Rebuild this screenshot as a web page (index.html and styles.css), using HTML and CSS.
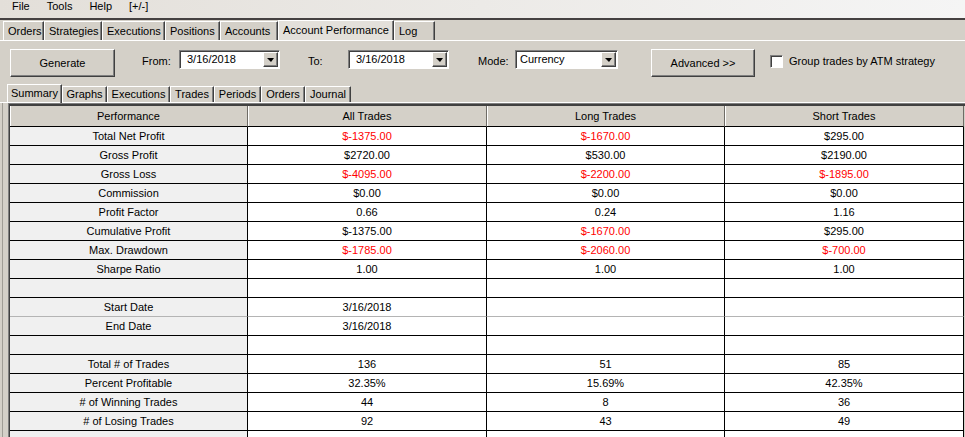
FILE: index.html
```html
<!DOCTYPE html>
<html lang="en">
<head>
<meta charset="utf-8">
<title>Account Performance</title>
<link rel="stylesheet" href="styles.css">
</head>
<body>
<div class="app">
  <nav class="menubar">
    <span>File</span>
    <span>Tools</span>
    <span>Help</span>
    <span>[+/-]</span>
  </nav>

  <div class="tabs">
    <div class="tab">Orders</div>
    <div class="tab">Strategies</div>
    <div class="tab">Executions</div>
    <div class="tab">Positions</div>
    <div class="tab">Accounts</div>
    <div class="tab is-active">Account Performance</div>
    <div class="tab">Log</div>
  </div>

  <div class="toolbar">
    <button class="btn btn-generate">Generate</button>
    <span class="field-label lbl-from">From:</span>
    <div class="combo"><span class="combo-text">3/16/2018</span><span class="combo-drop"></span></div>
    <span class="field-label lbl-to">To:</span>
    <div class="combo"><span class="combo-text">3/16/2018</span><span class="combo-drop"></span></div>
    <span class="field-label lbl-mode">Mode:</span>
    <div class="combo combo-mode"><span class="combo-text">Currency</span><span class="combo-drop"></span></div>
    <button class="btn btn-advanced">Advanced &gt;&gt;</button>
    <label class="check"><span class="check-box"></span><span>Group trades by ATM strategy</span></label>
  </div>

  <div class="subtabs">
    <div class="subtab is-active">Summary</div>
    <div class="subtab">Graphs</div>
    <div class="subtab">Executions</div>
    <div class="subtab">Trades</div>
    <div class="subtab">Periods</div>
    <div class="subtab">Orders</div>
    <div class="subtab">Journal</div>
  </div>

  <div class="tabpage">
    <div class="frame">
      <div class="sheet">
        <div class="row head">
          <div class="cell">Performance</div>
          <div class="cell">All Trades</div>
          <div class="cell">Long Trades</div>
          <div class="cell">Short Trades</div>
        </div>
        <div class="row">
          <div class="cell label">Total Net Profit</div>
          <div class="cell neg">$-1375.00</div>
          <div class="cell neg">$-1670.00</div>
          <div class="cell">$295.00</div>
        </div>
        <div class="row">
          <div class="cell label">Gross Profit</div>
          <div class="cell">$2720.00</div>
          <div class="cell">$530.00</div>
          <div class="cell">$2190.00</div>
        </div>
        <div class="row">
          <div class="cell label">Gross Loss</div>
          <div class="cell neg">$-4095.00</div>
          <div class="cell neg">$-2200.00</div>
          <div class="cell neg">$-1895.00</div>
        </div>
        <div class="row">
          <div class="cell label">Commission</div>
          <div class="cell">$0.00</div>
          <div class="cell">$0.00</div>
          <div class="cell">$0.00</div>
        </div>
        <div class="row">
          <div class="cell label">Profit Factor</div>
          <div class="cell">0.66</div>
          <div class="cell">0.24</div>
          <div class="cell">1.16</div>
        </div>
        <div class="row">
          <div class="cell label">Cumulative Profit</div>
          <div class="cell">$-1375.00</div>
          <div class="cell neg">$-1670.00</div>
          <div class="cell">$295.00</div>
        </div>
        <div class="row">
          <div class="cell label">Max. Drawdown</div>
          <div class="cell neg">$-1785.00</div>
          <div class="cell neg">$-2060.00</div>
          <div class="cell neg">$-700.00</div>
        </div>
        <div class="row">
          <div class="cell label">Sharpe Ratio</div>
          <div class="cell">1.00</div>
          <div class="cell">1.00</div>
          <div class="cell">1.00</div>
        </div>
        <div class="row">
          <div class="cell label"></div>
          <div class="cell"></div>
          <div class="cell"></div>
          <div class="cell"></div>
        </div>
        <div class="row row-soft">
          <div class="cell label">Start Date</div>
          <div class="cell">3/16/2018</div>
          <div class="cell"></div>
          <div class="cell"></div>
        </div>
        <div class="row">
          <div class="cell label">End Date</div>
          <div class="cell">3/16/2018</div>
          <div class="cell"></div>
          <div class="cell"></div>
        </div>
        <div class="row">
          <div class="cell label"></div>
          <div class="cell"></div>
          <div class="cell"></div>
          <div class="cell"></div>
        </div>
        <div class="row">
          <div class="cell label">Total # of Trades</div>
          <div class="cell">136</div>
          <div class="cell">51</div>
          <div class="cell">85</div>
        </div>
        <div class="row">
          <div class="cell label">Percent Profitable</div>
          <div class="cell">32.35%</div>
          <div class="cell">15.69%</div>
          <div class="cell">42.35%</div>
        </div>
        <div class="row">
          <div class="cell label"># of Winning Trades</div>
          <div class="cell">44</div>
          <div class="cell">8</div>
          <div class="cell">36</div>
        </div>
        <div class="row">
          <div class="cell label"># of Losing Trades</div>
          <div class="cell">92</div>
          <div class="cell">43</div>
          <div class="cell">49</div>
        </div>
        <div class="row">
          <div class="cell label"></div>
          <div class="cell"></div>
          <div class="cell"></div>
          <div class="cell"></div>
        </div>
      </div>
    </div>
  </div>
</div>
</body>
</html>
```

FILE: styles.css
```css
* {
  box-sizing: border-box;
}

html,
body {
  margin: 0;
  padding: 0;
}

body {
  width: 965px;
  height: 437px;
  overflow: hidden;
  background: #d4d0c8;
  color: #000;
  font: 11px "Liberation Sans", Arial, sans-serif;
}

/* ---- menu bar ---- */
.menubar {
  display: flex;
  gap: 17px;
  height: 20px;
  padding-left: 12px;
  line-height: 13px;
  background: linear-gradient(to right, #e3dfd9, #f5f5f5);
  border-bottom: 2px solid #454141;
}

/* ---- main window tabs ---- */
.tabs {
  display: flex;
  align-items: flex-end;
  height: 21px;
  padding-left: 3px;
  border-bottom: 1px solid #fff;
}

.tab {
  height: 19px;
  padding-left: 4px;
  line-height: 18px;
  white-space: nowrap;
  border-top: 1px solid #fff;
  border-left: 1px solid #fff;
  border-right: 1px solid #404040;
  box-shadow: inset -1px 0 #808080;
}

.tab:nth-child(1) { width: 41px; }
.tab:nth-child(2) { width: 58px; }
.tab:nth-child(3) { width: 63px; }
.tab:nth-child(4) { width: 55px; }
.tab:nth-child(5) { width: 58px; }
.tab:nth-child(6) { width: 116px; }
.tab:nth-child(7) { width: 41px; }

.tab.is-active {
  height: 20px;
  background: #e3e0da;
}

/* ---- toolbar ---- */
.toolbar {
  display: flex;
  align-items: flex-start;
  height: 42px;
  padding-left: 10px;
}

.btn {
  height: 28px;
  margin-top: 8px;
  padding: 0;
  font: inherit;
  color: #000;
  background: #d4d0c8;
  border: 1px solid;
  border-color: #fff #404040 #404040 #fff;
  box-shadow: inset -1px -1px #808080;
}

.btn-generate {
  width: 105px;
}

.btn-advanced {
  width: 104px;
  margin-left: 33px;
}

.field-label {
  margin-top: 14px;
  line-height: 13px;
  white-space: nowrap;
}

.lbl-from { width: 37px; margin-left: 27px; }
.lbl-to { width: 40px; margin-left: 28px; }
.lbl-mode { width: 37px; margin-left: 29px; }

.combo {
  display: flex;
  align-items: center;
  width: 101px;
  height: 19px;
  margin-top: 9px;
  padding: 1px 1px 1px 7px;
  background: #fff;
  border: 1px solid;
  border-color: #808080 #fff #fff #808080;
  box-shadow: inset 1px 1px #404040;
}

.combo-mode {
  width: 103px;
  padding-left: 4px;
}

.combo-text {
  flex: 1;
  line-height: 13px;
}

.combo-drop {
  display: flex;
  align-items: center;
  justify-content: center;
  width: 15px;
  height: 15px;
  background: #d4d0c8;
  border: 1px solid;
  border-color: #fff #404040 #404040 #fff;
  box-shadow: inset -1px -1px #808080;
}

.combo-drop::after {
  content: "";
  width: 0;
  height: 0;
  margin-top: 1px;
  border-left: 4px solid transparent;
  border-right: 3px solid transparent;
  border-top: 4px solid #000;
}

.check {
  display: flex;
  align-items: center;
  gap: 6px;
  margin-left: 15px;
  margin-top: 14px;
  line-height: 13px;
  white-space: nowrap;
}

.check-box {
  width: 13px;
  height: 13px;
  background: #fff;
  border: 1px solid;
  border-color: #808080 #fff #fff #808080;
  box-shadow: inset 1px 1px #404040;
}

/* ---- report tabs ---- */
.subtabs {
  display: flex;
  align-items: flex-end;
  height: 20px;
  padding-left: 7px;
  border-bottom: 1px solid #fff;
}

.subtab {
  height: 16px;
  line-height: 15px;
  text-align: center;
  white-space: nowrap;
  border-top: 1px solid #fff;
  border-left: 1px solid #fff;
  border-right: 1px solid #404040;
  box-shadow: inset -1px 0 #808080;
}

.subtab:nth-child(1) { width: 55px; }
.subtab:nth-child(2) { width: 45px; }
.subtab:nth-child(3) { width: 63px; }
.subtab:nth-child(4) { width: 44px; }
.subtab:nth-child(5) { width: 47px; }
.subtab:nth-child(6) { width: 44px; }
.subtab:nth-child(7) { width: 46px; }

.subtab.is-active {
  height: 19px;
  margin-bottom: -1px;
  line-height: 17px;
}

/* ---- summary grid ---- */
.tabpage {
  margin-left: 2px;
  padding-left: 5px;
  border-left: 1px solid #a09d96;
  height: 334px;
}

.frame {
  border-top: 1px solid #808080;
  border-left: 1px solid #808080;
}

.sheet {
  border-top: 2px solid #404040;
  border-left: 1px solid #404040;
}

.row {
  display: grid;
  grid-template-columns: 238px 239px 238px 239px;
}

.cell {
  height: 19px;
  line-height: 18px;
  text-align: center;
  white-space: nowrap;
  background: #fff;
  border-right: 1px solid #000;
  border-bottom: 1px solid #000;
}

.cell.label {
  background: #f0f0f0;
}

.row.head .cell {
  height: 21px;
  line-height: 20px;
  background: #d4d0c8;
  border-right-color: #6f6c66;
  box-shadow: inset 1px 0 #fff;
}

.row-soft .cell {
  border-bottom-color: #b4b4b4;
}

.neg {
  color: #f00;
}
```
